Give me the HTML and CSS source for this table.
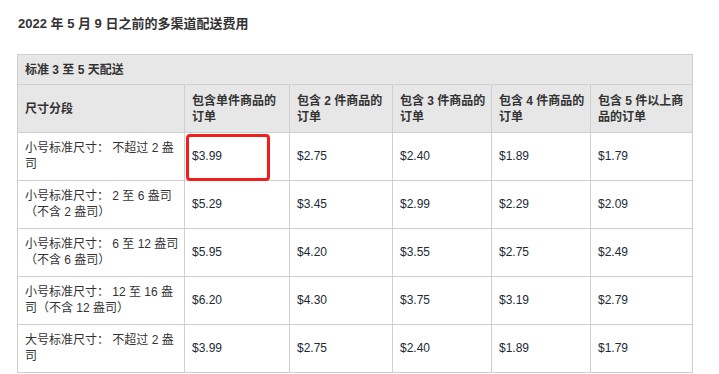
FILE: index.html
```html
<!DOCTYPE html>
<html lang="zh-CN">
<head>
<meta charset="utf-8">
<link rel="stylesheet" href="styles.css">
</head>
<body>
<h3 class="title">2022 年 5 月 9 日之前的多渠道配送费用</h3>
<table class="fees">
  <colgroup>
    <col class="c-size">
    <col class="c-1">
    <col class="c-2">
    <col class="c-3">
    <col class="c-4">
    <col class="c-5">
  </colgroup>
  <thead>
    <tr class="caption-row"><th colspan="6">标准 3 至 5 天配送</th></tr>
    <tr class="head-row">
      <th>尺寸分段</th>
      <th>包含单件商品的<br>订单</th>
      <th>包含 2 件商品的<br>订单</th>
      <th>包含 3 件商品的<br>订单</th>
      <th>包含 4 件商品的<br>订单</th>
      <th>包含 5 件以上商<br>品的订单</th>
    </tr>
  </thead>
  <tbody>
    <tr>
      <td>小号标准尺寸： 不超过 2 盎<br>司</td>
      <td class="price marked">$3.99<span class="highlight"></span></td>
      <td class="price">$2.75</td>
      <td class="price">$2.40</td>
      <td class="price">$1.89</td>
      <td class="price">$1.79</td>
    </tr>
    <tr>
      <td>小号标准尺寸： 2 至 6 盎司<br>（不含 2 盎司）</td>
      <td class="price">$5.29</td>
      <td class="price">$3.45</td>
      <td class="price">$2.99</td>
      <td class="price">$2.29</td>
      <td class="price">$2.09</td>
    </tr>
    <tr>
      <td>小号标准尺寸： 6 至 12 盎司<br>（不含 6 盎司）</td>
      <td class="price">$5.95</td>
      <td class="price">$4.20</td>
      <td class="price">$3.55</td>
      <td class="price">$2.75</td>
      <td class="price">$2.49</td>
    </tr>
    <tr>
      <td>小号标准尺寸： 12 至 16 盎<br>司（不含 12 盎司）</td>
      <td class="price">$6.20</td>
      <td class="price">$4.30</td>
      <td class="price">$3.75</td>
      <td class="price">$3.19</td>
      <td class="price">$2.79</td>
    </tr>
    <tr>
      <td>大号标准尺寸： 不超过 2 盎<br>司</td>
      <td class="price">$3.99</td>
      <td class="price">$2.75</td>
      <td class="price">$2.40</td>
      <td class="price">$1.89</td>
      <td class="price">$1.79</td>
    </tr>
  </tbody>
</table>
</body>
</html>
```

FILE: styles.css
```css
html, body {
  margin: 0;
  padding: 0;
  background: #fff;
}
body {
  padding: 15px 0 0 17px;
  font-family: "Liberation Sans", Arial, "Noto Sans CJK SC", sans-serif;
  font-size: 12px;
  color: #333;
}
.title {
  margin: 0 0 21px 1px;
  font-size: 13px;
  line-height: 18px;
  font-weight: bold;
  color: #333;
}
.fees {
  border-collapse: collapse;
  table-layout: fixed;
  width: 675px;
}
.c-size { width: 167px; }
.c-1 { width: 105px; }
.c-2 { width: 103px; }
.c-3 { width: 99px; }
.c-4 { width: 99px; }
.c-5 { width: 102px; }
.fees th, .fees td {
  border: 1px solid #cfcfcf;
  padding: 7px 7px 8px 7px;
  line-height: 16px;
  text-align: left;
  vertical-align: middle;
  white-space: nowrap;
}
.fees th {
  background: #e7e7e7;
  font-weight: bold;
  color: #333;
}
.caption-row th {
  padding-top: 7px;
  padding-bottom: 6px;
}
.head-row th {
  padding-top: 8px;
  padding-bottom: 7px;
}
.price {
  color: #1e2a36;
}
.marked {
  position: relative;
}
.highlight {
  position: absolute;
  left: 1px;
  top: 1px;
  width: 84px;
  height: 47px;
  box-sizing: border-box;
  border: 3px solid #f21d1d;
  border-radius: 4px;
}
```
